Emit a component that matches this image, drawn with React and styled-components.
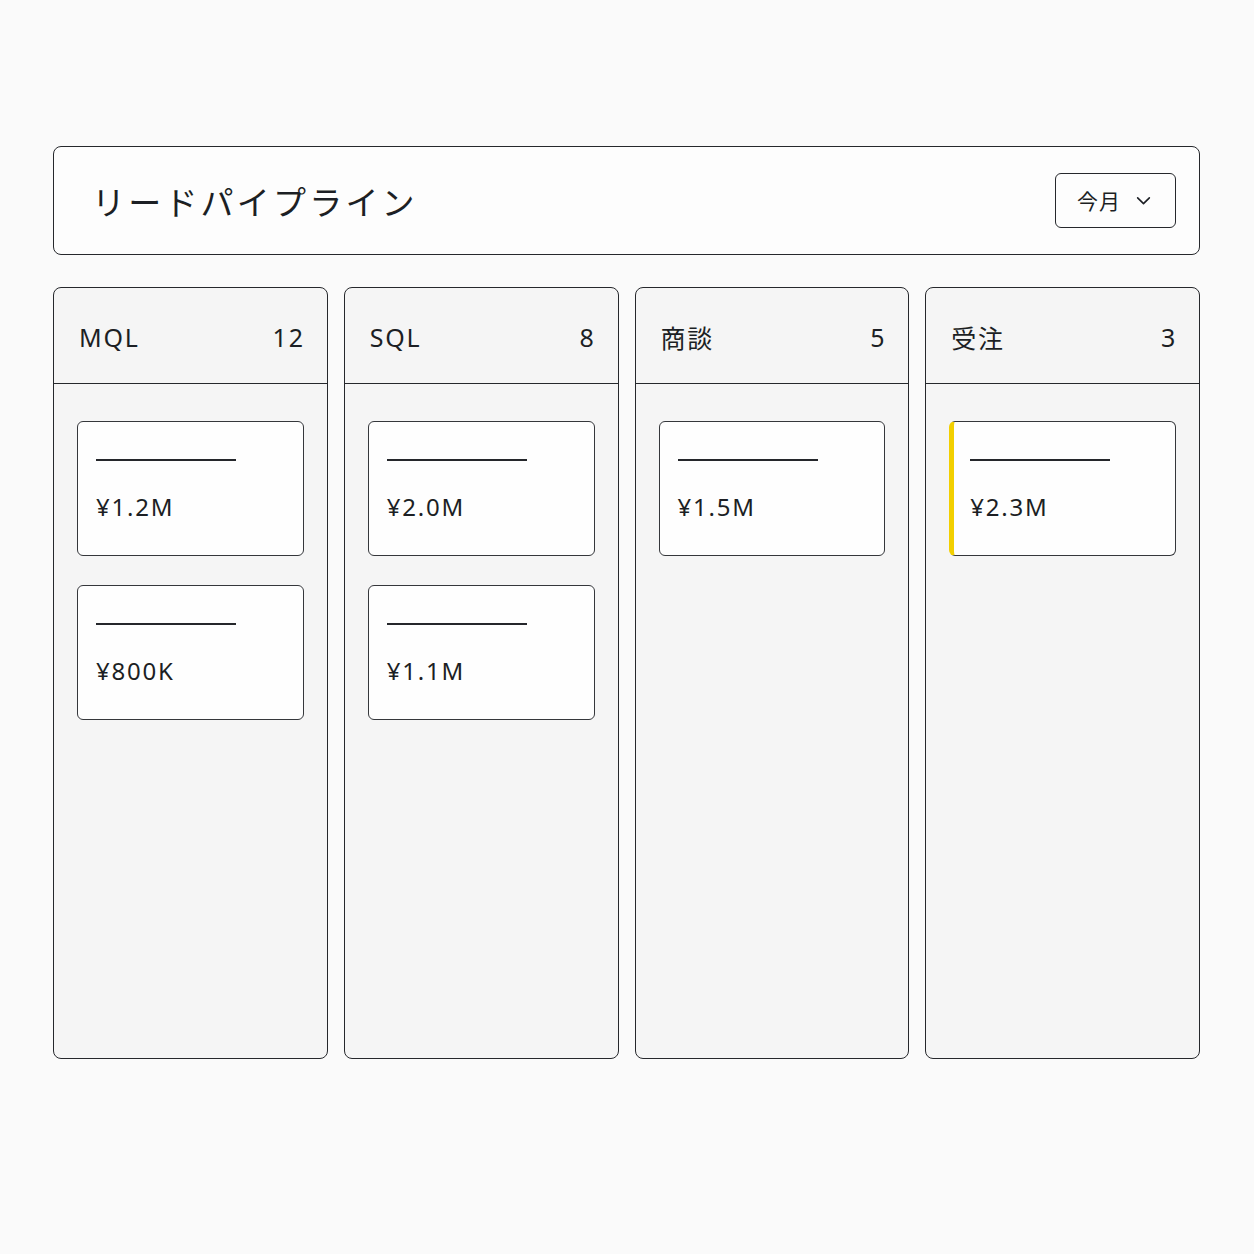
import React from "react";
import styled, { createGlobalStyle } from "styled-components";

const GlobalStyle = createGlobalStyle`
  html, body {
    margin: 0;
    background: #fafafa;
    font-family: "Noto Sans", "Noto Sans CJK JP", sans-serif;
    color: #1c1f24;
  }
`;

const Page = styled.div`
  width: 1254px;
  height: 1254px;
  box-sizing: border-box;
  padding: 146px 54px 0 53px;
  display: flex;
  flex-direction: column;
  gap: 32px;
`;

const Header = styled.header`
  height: 109px;
  box-sizing: border-box;
  border: 1.5px solid #26282c;
  border-radius: 8px;
  background: #fdfdfd;
  display: flex;
  align-items: center;
  justify-content: space-between;
  padding: 0 23px 0 38px;
`;

const Title = styled.h1`
  margin: 0;
  font-family: "Noto Sans CJK JP", sans-serif;
  font-size: 33px;
  font-weight: 400;
  letter-spacing: 3.2px;
  color: #1c1f24;
`;

const RangeButton = styled.button`
  width: 121px;
  height: 55px;
  box-sizing: border-box;
  border: 1.5px solid #26282c;
  border-radius: 6px;
  background: #fdfdfd;
  display: flex;
  align-items: center;
  justify-content: flex-start;
  gap: 14px;
  font-family: "Noto Sans CJK JP", sans-serif;
  font-size: 21px;
  letter-spacing: 1px;
  color: #1c1f24;
  padding: 0 0 1px 21px;
`;

const Board = styled.div`
  display: grid;
  grid-template-columns: repeat(4, 1fr);
  gap: 16px;
`;

const Column = styled.section`
  height: 772px;
  box-sizing: border-box;
  border: 1.5px solid #26282c;
  border-radius: 8px;
  background: #f5f5f5;
  display: flex;
  flex-direction: column;
`;

const ColumnHead = styled.div`
  height: 96px;
  box-sizing: border-box;
  border-bottom: 1.5px solid #26282c;
  display: flex;
  align-items: center;
  justify-content: space-between;
  padding: 2px 22px 0 25px;
  font-size: 25px;
  letter-spacing: 1.8px;
`;

const StageName = styled.span`
  font-family: "Noto Sans", "Noto Sans CJK JP", sans-serif;
  font-weight: 400;
`;

const Count = styled.span`
  font-weight: 400;
`;

const CardList = styled.div`
  display: flex;
  flex-direction: column;
  gap: 29px;
  padding: 37px 23px 0 23px;
`;

const Card = styled.div`
  height: 135px;
  box-sizing: border-box;
  border: 1.5px solid #35373b;
  border-left: ${(p) => (p.$won ? "5px solid #f2cf00" : "1.5px solid #35373b")};
  border-radius: 6px;
  background: #fefefe;
  padding: 37px 0 0 ${(p) => (p.$won ? "16px" : "18px")};
  display: flex;
  flex-direction: column;
`;

const NameBar = styled.div`
  width: 140px;
  height: 2px;
  background: #25272b;
`;

const Amount = styled.div`
  margin-top: 31px;
  font-size: 24px;
  letter-spacing: 1.8px;
  line-height: 30px;
  color: #1c1f24;
`;

const Chevron = () => (
  <svg width="17" height="17" viewBox="0 0 16 16" fill="none">
    <path d="M2.5 5.5 8 11l5.5-5.5" stroke="#1c1f24" strokeWidth="1.5" strokeLinecap="round" strokeLinejoin="round" />
  </svg>
);

const stages = [
  { name: "MQL", count: 12, deals: ["¥1.2M", "¥800K"] },
  { name: "SQL", count: 8, deals: ["¥2.0M", "¥1.1M"] },
  { name: "商談", count: 5, deals: ["¥1.5M"] },
  { name: "受注", count: 3, deals: ["¥2.3M"], won: true },
];

export default function App() {
  return (
    <>
      <GlobalStyle />
      <Page>
        <Header>
          <Title>リードパイプライン</Title>
          <RangeButton>
            今月
            <Chevron />
          </RangeButton>
        </Header>
        <Board>
          {stages.map((s) => (
            <Column key={s.name}>
              <ColumnHead>
                <StageName>{s.name}</StageName>
                <Count>{s.count}</Count>
              </ColumnHead>
              <CardList>
                {s.deals.map((d) => (
                  <Card key={d} $won={s.won}>
                    <NameBar />
                    <Amount>{d}</Amount>
                  </Card>
                ))}
              </CardList>
            </Column>
          ))}
        </Board>
      </Page>
    </>
  );
}
